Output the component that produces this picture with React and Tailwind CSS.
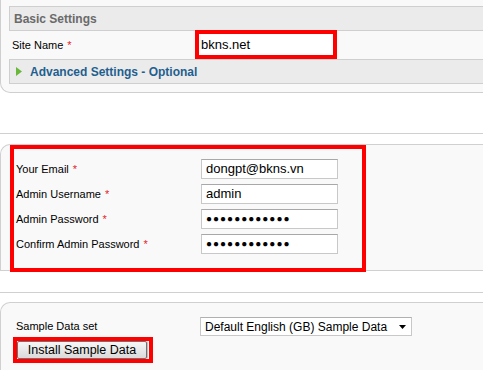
export default function App() {
  const Star = () => <span className="text-[#e0242b] ml-[4px]">*</span>;
  const inputCls = 'h-[20px] w-[137px] border border-[#c8c8c8] border-t-[#a8a8a8] bg-white px-[4px] text-[13px] leading-[18px] text-black';

  return (
    <div className="w-[483px] h-[370px] overflow-hidden bg-white text-[11px] text-black" style={{ fontFamily: '"Liberation Sans", Arial, sans-serif' }}>
      {/* Basic settings */}
      <div className="-mt-[4px] pt-[9px] pl-[8px] pb-[8px] border border-r-0 border-[#cfcfcf] rounded-bl-[10px] bg-[#f9f9f9]">
        <div className="h-[25px] flex items-center pl-[4px] border border-r-0 border-[#cfcfcf] bg-[#ebebeb] text-[12px] font-bold text-[#6a6a6a]">
          Basic Settings
        </div>
        <div className="h-[28px] flex items-center">
          <div className="w-[186px] pl-[3px]">Site Name<Star /></div>
          <div className="h-[29px] w-[142px] border-[4px] border-[#ff0000] -mt-[1px] bg-white flex items-center px-[2px] text-[13px]">
            bkns.net
          </div>
        </div>
        <div className="h-[25px] flex items-center pl-[6px] border border-r-0 border-[#cfcfcf] bg-[#ebebeb] text-[12px] font-bold text-[#1f5f8f]">
          <svg width="6" height="9" viewBox="0 0 6 9" className="mr-[8px]"><path d="M0 0 L6 4.5 L0 9 Z" fill="#6ab83a" /></svg>
          Advanced Settings - Optional
        </div>
      </div>

      <div className="h-[40px]" />
      <div className="border-t border-[#d0d0d0]" />
      <div className="h-[10px]" />

      {/* Admin */}
      <div className="h-[127px] border border-r-0 border-[#d0d0d0] rounded-tl-[10px] bg-[#f9f9f9]">
        <div className="ml-[9px] w-[356px] h-[127px] border-[4px] border-[#ff0000] pt-[10px] flex flex-col gap-[5px]">
          {[
            ['Your Email', 'dongpt@bkns.vn'],
            ['Admin Username', 'admin'],
            ['Admin Password', '●●●●●●●●●●●●'],
            ['Confirm Admin Password', '●●●●●●●●●●●●'],
          ].map(([label, value]) => (
            <div key={label} className="flex items-center h-[20px]">
              <div className="w-[187px] pl-[2px] whitespace-nowrap">{label}<Star /></div>
              <div className={inputCls + ' flex items-center'}>
                <span className={value.startsWith('●') ? 'text-[10px] tracking-[1px]' : ''}>{value}</span>
              </div>
            </div>
          ))}
        </div>
      </div>

      <div className="h-[21px]" />
      <div className="border-t border-[#d0d0d0]" />
      <div className="h-[9px]" />

      {/* Sample data */}
      <div className="h-[80px] border border-r-0 border-[#d0d0d0] rounded-tl-[10px] bg-[#f9f9f9] pt-[14px]">
        <div className="flex items-center h-[19px]">
          <div className="w-[199px] pl-[15px]">Sample Data set</div>
          <div className="h-[19px] w-[212px] border border-[#c8c8c8] border-t-[#b0b0b0] bg-white flex items-center justify-between pl-[4px] pr-[5px] text-[12px] whitespace-nowrap">
            <span>Default English (GB) Sample Data</span>
            <svg width="7" height="4" viewBox="0 0 7 4"><path d="M0 0 L7 0 L3.5 4 Z" fill="#000" /></svg>
          </div>
        </div>
        <div className="ml-[12px] mt-[1px] w-[140px] h-[26px] border-[4px] border-[#ff0000] flex">
          <div className="h-[18px] w-[130px] border border-[#707070] rounded-[2px] bg-gradient-to-b from-[#f6f6f6] to-[#dadada] shadow-[1px_0_0_#bdbdbd] flex items-center justify-center text-[12.5px] whitespace-nowrap">
            Install Sample Data
          </div>
        </div>
      </div>
    </div>
  );
}
